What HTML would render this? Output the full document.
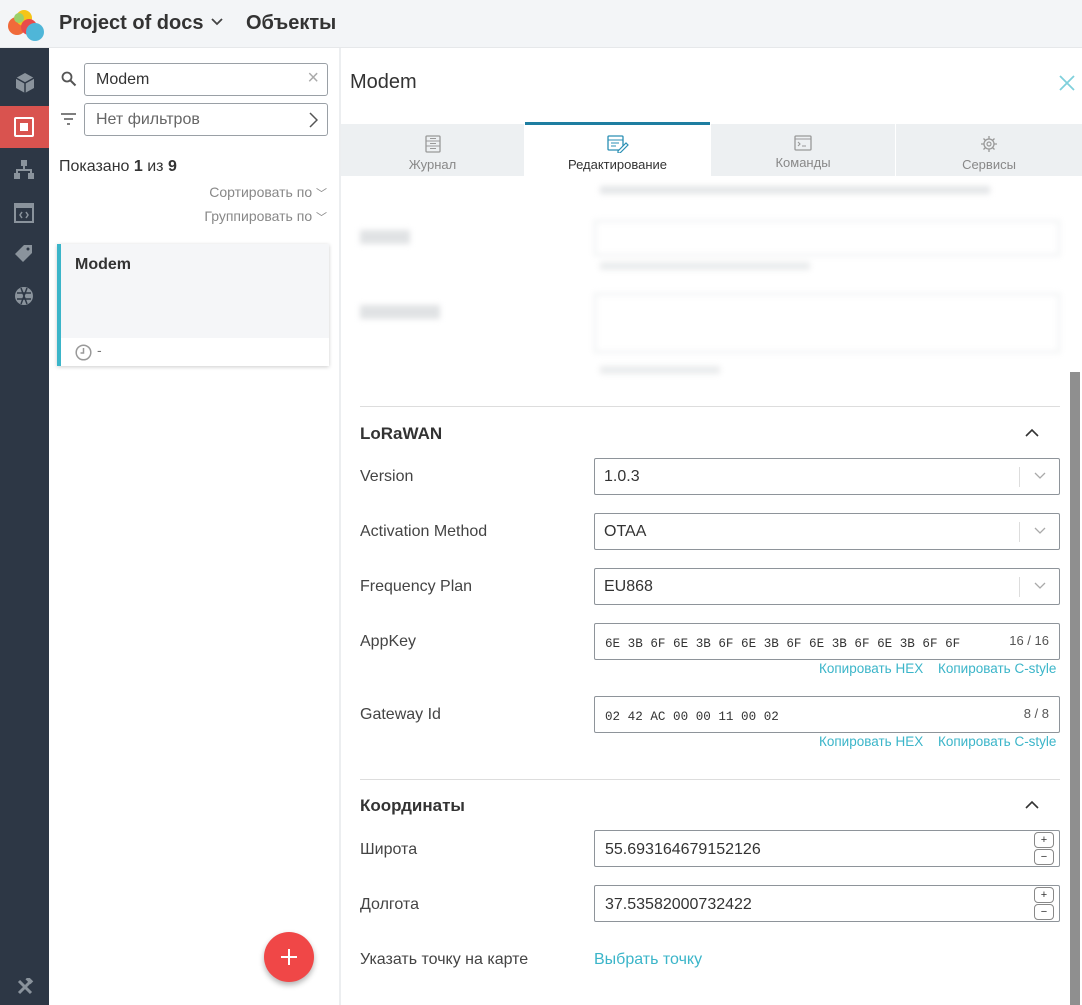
<!DOCTYPE html>
<html><head><meta charset="utf-8"><style>
*{box-sizing:border-box;margin:0;padding:0}
body{width:1082px;height:1005px;overflow:hidden;font-family:"Liberation Sans","Noto Sans CJK SC",sans-serif;background:#fff;position:relative;color:#333}
.abs{position:absolute}
.hdr{left:0;top:0;width:1082px;height:48px;background:#f3f5f7;border-bottom:1px solid #e6e8ea}
.side{left:0;top:48px;width:49px;height:957px;background:#2d3745}
.left{left:49px;top:48px;width:292px;height:957px;background:#fff;border-right:2px solid #eceef0}
.inp{border:1px solid #9aa0a6;border-radius:3px;height:33px;font-size:16px;padding:7px 11px;color:#333}
.lbl{left:360px;font-size:16px;color:#444}
.sel{left:594px;width:466px;height:37px;border:1px solid #8e949a;border-radius:2px;font-size:16px;padding:9px 9px;color:#333}
.sel .arr{position:absolute;right:0;top:8px;width:40px;height:20px;border-left:1px solid #ddd}
.mono{font-family:"Liberation Mono",monospace;font-size:12.6px}
.link{color:#3bb5c9;font-size:13.5px}
.tab{top:124px;height:52px;background:#edf0f2;font-size:13px;color:#888;text-align:center}
.tab svg{display:block;margin:11px auto 0}
.tab .t{margin-top:4px}
.blur{filter:blur(3px)}
</style></head><body>
<div class="abs hdr">
 <svg class="abs" style="left:5px;top:6px" width="40" height="36"><circle cx="12" cy="20" r="9" fill="#f06a3a"/><circle cx="19" cy="12" r="8" fill="#f5c518"/><circle cx="24" cy="21" r="8" fill="#e84b4b"/><circle cx="30" cy="26" r="9" fill="#4fb6d8"/><circle cx="14" cy="12" r="5" fill="#9bd06a"/></svg>
 <div class="abs" style="left:59px;top:12px;font-size:20px;font-weight:bold;color:#333">Project of docs</div>
 <svg class="abs" style="left:211px;top:18px" width="12" height="8"><path d="M1 1l5 5 5-5" stroke="#444" stroke-width="1.8" fill="none"/></svg>
 <div class="abs" style="left:246px;top:12px;font-size:20px;font-weight:bold;color:#333">Объекты</div>
</div>
<div class="abs side">
 <svg class="abs" style="left:14px;top:24px" width="22" height="22"><path d="M11 1l9 5v10l-9 5-9-5V6z" fill="#8a939c"/><path d="M2 6l9 5 9-5M11 11v10" stroke="#2d3745" stroke-width="1.5" fill="none"/></svg>
 <div class="abs" style="left:0;top:58px;width:49px;height:42px;background:#d9534f"></div>
 <div class="abs" style="left:14px;top:69px;width:20px;height:20px;border:2px solid #fff;border-radius:2px"></div>
 <div class="abs" style="left:20px;top:75px;width:8px;height:8px;background:#fff"></div>
 <svg class="abs" style="left:14px;top:112px" width="20" height="20"><rect x="7" y="0" width="6" height="6" fill="#8a939c"/><rect x="0" y="13" width="6" height="6" fill="#8a939c"/><rect x="14" y="13" width="6" height="6" fill="#8a939c"/><path d="M10 6v4M3 13v-3h14v3" stroke="#8a939c" stroke-width="2" fill="none"/></svg>
 <svg class="abs" style="left:14px;top:155px" width="20" height="20"><rect x="1" y="1" width="18" height="18" fill="none" stroke="#8a939c" stroke-width="2"/><rect x="1" y="1" width="18" height="4" fill="#8a939c"/><path d="M8 9l-2 3 2 3M12 9l2 3-2 3" stroke="#8a939c" stroke-width="1.5" fill="none"/></svg>
 <svg class="abs" style="left:14px;top:196px" width="20" height="20"><path d="M10 1h8v8L9 18 1 10z" fill="#8a939c"/><circle cx="14" cy="5" r="1.5" fill="#2d3745"/></svg>
 <svg class="abs" style="left:14px;top:238px" width="20" height="20"><circle cx="10" cy="10" r="9" fill="#8a939c"/><path d="M3 7h14M3 13h14M7 2l6 16M13 2L7 18" stroke="#2d3745" stroke-width="1.5"/></svg>
 <svg class="abs" style="left:16px;top:930px" width="18" height="18"><path d="M3 3l12 12M15 3L3 15" stroke="#8a939c" stroke-width="3"/><rect x="10" y="0" width="7" height="4" fill="#8a939c" transform="rotate(45 13 2)"/></svg>
</div>
<div class="abs left">
 <svg class="abs" style="left:12px;top:23px" width="16" height="16"><circle cx="6" cy="6" r="4.5" stroke="#555" stroke-width="1.8" fill="none"/><path d="M9.5 9.5l5 5" stroke="#555" stroke-width="2"/></svg>
 <div class="abs inp" style="left:35px;top:15px;width:244px">Modem<span style="position:absolute;right:8px;top:3px;color:#aaa;font-size:20px">×</span></div>
 <svg class="abs" style="left:12px;top:65px" width="16" height="12"><path d="M0 1h15M3 6h9M6 11h3" stroke="#555" stroke-width="1.6"/></svg>
 <div class="abs inp" style="left:35px;top:55px;width:244px;color:#666">Нет фильтров<svg style="position:absolute;right:9px;top:8px" width="9" height="16"><path d="M1 1l7 7-7 7" stroke="#555" stroke-width="1.5" fill="none"/></svg></div>
 <div class="abs" style="left:10px;top:110px;font-size:16px">Показано <b>1</b> из <b>9</b></div>
 <div class="abs" style="right:12px;top:136px;font-size:14px;color:#888">Сортировать по <span style="font-size:11px">﹀</span></div>
 <div class="abs" style="right:12px;top:160px;font-size:14px;color:#888">Группировать по <span style="font-size:11px">﹀</span></div>
 <div class="abs" style="left:8px;top:196px;width:272px;height:122px;background:#f5f6f8;box-shadow:0 1px 4px rgba(0,0,0,.2);border-left:4px solid #3bb5c9">
  <div class="abs" style="left:14px;top:12px;font-size:16px;font-weight:bold;color:#333">Modem</div>
  <div class="abs" style="left:0;top:94px;width:268px;height:28px;background:#fff"></div>
  <svg class="abs" style="left:14px;top:100px" width="17" height="17"><circle cx="8.5" cy="8.5" r="7.3" stroke="#999" stroke-width="1.5" fill="none"/><path d="M8.5 4v5h-3" stroke="#999" stroke-width="1.5" fill="none"/></svg>
  <div class="abs" style="left:36px;top:98px;font-size:14px;color:#777">-</div>
 </div>
 <div class="abs" style="left:215px;top:884px;width:50px;height:50px;border-radius:50%;background:#f04747;box-shadow:0 3px 6px rgba(0,0,0,.3)"><svg style="position:absolute;left:16px;top:16px" width="18" height="18"><path d="M9 1v16M1 9h16" stroke="#fff" stroke-width="2"/></svg></div>
</div>
<div class="abs" style="left:350px;top:71px;font-size:20px;color:#333">Modem</div>
<svg class="abs" style="left:1059px;top:75px" width="16" height="16"><path d="M1 1l14 14M15 1L1 15" stroke="#7fd0dc" stroke-width="1.8"/></svg>
<div class="abs tab" style="left:341px;width:183px"><svg width="16" height="18"><rect x="1" y="1" width="14" height="16" rx="1" fill="none" stroke="#999" stroke-width="1.3"/><path d="M1 6h14M1 11h14M5 3.5h6M5 8.5h6M5 13.5h6" stroke="#999" stroke-width="1"/></svg><div class="t">Журнал</div></div>
<div class="abs tab" style="left:525px;width:185px;background:#fff;border-top:3px solid #1e7ea1;top:122px;height:54px;color:#333"><svg width="22" height="18" style="margin-top:10px"><rect x="1" y="1" width="15" height="14" rx="1" fill="none" stroke="#2a8fb4" stroke-width="1.3"/><path d="M1 5h15M4 8h8M4 11h5" stroke="#2a8fb4" stroke-width="1.1"/><path d="M11 16l8-8 2 2-8 8h-2z" fill="#fff" stroke="#2a8fb4" stroke-width="1.2"/></svg><div class="t">Редактирование</div></div>
<div class="abs tab" style="left:711px;width:184px"><svg width="18" height="16"><rect x="1" y="1" width="16" height="14" rx="1" fill="none" stroke="#999" stroke-width="1.3"/><path d="M1 4h16M4 7l2 2-2 2M8 11h4" stroke="#999" stroke-width="1.1" fill="none"/></svg><div class="t">Команды</div></div>
<div class="abs tab" style="left:896px;width:186px"><svg width="18" height="18"><circle cx="9" cy="9" r="5" fill="none" stroke="#999" stroke-width="1.3"/><circle cx="9" cy="9" r="2" fill="none" stroke="#999" stroke-width="1.2"/><path d="M9 1v3M9 14v3M1 9h3M14 9h3M3.5 3.5l2 2M12.5 12.5l2 2M3.5 14.5l2-2M12.5 5.5l2-2" stroke="#999" stroke-width="1.3"/></svg><div class="t">Сервисы</div></div>
<div class="abs blur" style="left:600px;top:186px;width:390px;height:8px;background:#e4e6e8"></div>
<div class="abs blur" style="left:360px;top:230px;width:50px;height:14px;background:#e0e2e4"></div>
<div class="abs blur" style="left:594px;top:220px;width:466px;height:36px;border:2px solid #eceef0"></div>
<div class="abs blur" style="left:600px;top:262px;width:210px;height:8px;background:#eaeced"></div>
<div class="abs blur" style="left:360px;top:305px;width:80px;height:14px;background:#e0e2e4"></div>
<div class="abs blur" style="left:594px;top:293px;width:466px;height:60px;border:2px solid #eceef0"></div>
<div class="abs blur" style="left:600px;top:366px;width:120px;height:8px;background:#eaeced"></div>
<div class="abs" style="left:1070px;top:372px;width:10px;height:633px;background:#8f8f8f"></div>
<div class="abs" style="left:360px;top:406px;width:700px;height:1px;background:#ddd"></div>
<div class="abs" style="left:360px;top:424px;font-size:17px;font-weight:bold;color:#333">LoRaWAN</div>
<svg class="abs" style="left:1025px;top:428px" width="14" height="9"><path d="M1 8l6-6 6 6" stroke="#333" stroke-width="1.6" fill="none"/></svg>
<div class="abs lbl" style="top:468px">Version</div>
<div class="abs sel" style="top:458px">1.0.3<div class="arr"><svg style="margin:5px 0 0 14px" width="12" height="8"><path d="M1 1l5 5 5-5" stroke="#aaa" stroke-width="1.3" fill="none"/></svg></div></div>
<div class="abs lbl" style="top:523px">Activation Method</div>
<div class="abs sel" style="top:513px">OTAA<div class="arr"><svg style="margin:5px 0 0 14px" width="12" height="8"><path d="M1 1l5 5 5-5" stroke="#aaa" stroke-width="1.3" fill="none"/></svg></div></div>
<div class="abs lbl" style="top:578px">Frequency Plan</div>
<div class="abs sel" style="top:568px">EU868<div class="arr"><svg style="margin:5px 0 0 14px" width="12" height="8"><path d="M1 1l5 5 5-5" stroke="#aaa" stroke-width="1.3" fill="none"/></svg></div></div>
<div class="abs lbl" style="top:633px">AppKey</div>
<div class="abs sel" style="top:623px;padding-top:10px;padding-left:10px"><span class="mono">6E 3B 6F 6E 3B 6F 6E 3B 6F 6E 3B 6F 6E 3B 6F 6F</span><span style="position:absolute;right:10px;top:9px;font-size:13px;color:#555">16 / 16</span></div>
<div class="abs link" style="left:819px;top:661px">Копировать HEX</div>
<div class="abs link" style="left:938px;top:661px">Копировать C-style</div>
<div class="abs lbl" style="top:706px">Gateway Id</div>
<div class="abs sel" style="top:696px;padding-top:10px;padding-left:10px"><span class="mono">02 42 AC 00 00 11 00 02</span><span style="position:absolute;right:10px;top:9px;font-size:13px;color:#555">8 / 8</span></div>
<div class="abs link" style="left:819px;top:734px">Копировать HEX</div>
<div class="abs link" style="left:938px;top:734px">Копировать C-style</div>
<div class="abs" style="left:360px;top:779px;width:700px;height:1px;background:#ddd"></div>
<div class="abs" style="left:360px;top:796px;font-size:17px;font-weight:bold;color:#333">Координаты</div>
<svg class="abs" style="left:1025px;top:800px" width="14" height="9"><path d="M1 8l6-6 6 6" stroke="#333" stroke-width="1.6" fill="none"/></svg>
<div class="abs lbl" style="top:841px">Широта</div>
<div class="abs sel" style="top:830px;padding-left:10px;padding-top:10px">55.693164679152126<div class="abs" style="right:5px;top:1px;width:20px;height:16px;border:1px solid #888;border-radius:4px;font-size:11px;text-align:center;line-height:14px">+</div><div class="abs" style="right:5px;top:18px;width:20px;height:16px;border:1px solid #888;border-radius:4px;font-size:11px;text-align:center;line-height:14px">−</div></div>
<div class="abs lbl" style="top:896px">Долгота</div>
<div class="abs sel" style="top:885px;padding-left:10px;padding-top:10px">37.53582000732422<div class="abs" style="right:5px;top:1px;width:20px;height:16px;border:1px solid #888;border-radius:4px;font-size:11px;text-align:center;line-height:14px">+</div><div class="abs" style="right:5px;top:18px;width:20px;height:16px;border:1px solid #888;border-radius:4px;font-size:11px;text-align:center;line-height:14px">−</div></div>
<div class="abs lbl" style="top:951px">Указать точку на карте</div>
<div class="abs" style="left:594px;top:951px;font-size:16px;color:#3bb5c9">Выбрать точку</div>
</body></html>
